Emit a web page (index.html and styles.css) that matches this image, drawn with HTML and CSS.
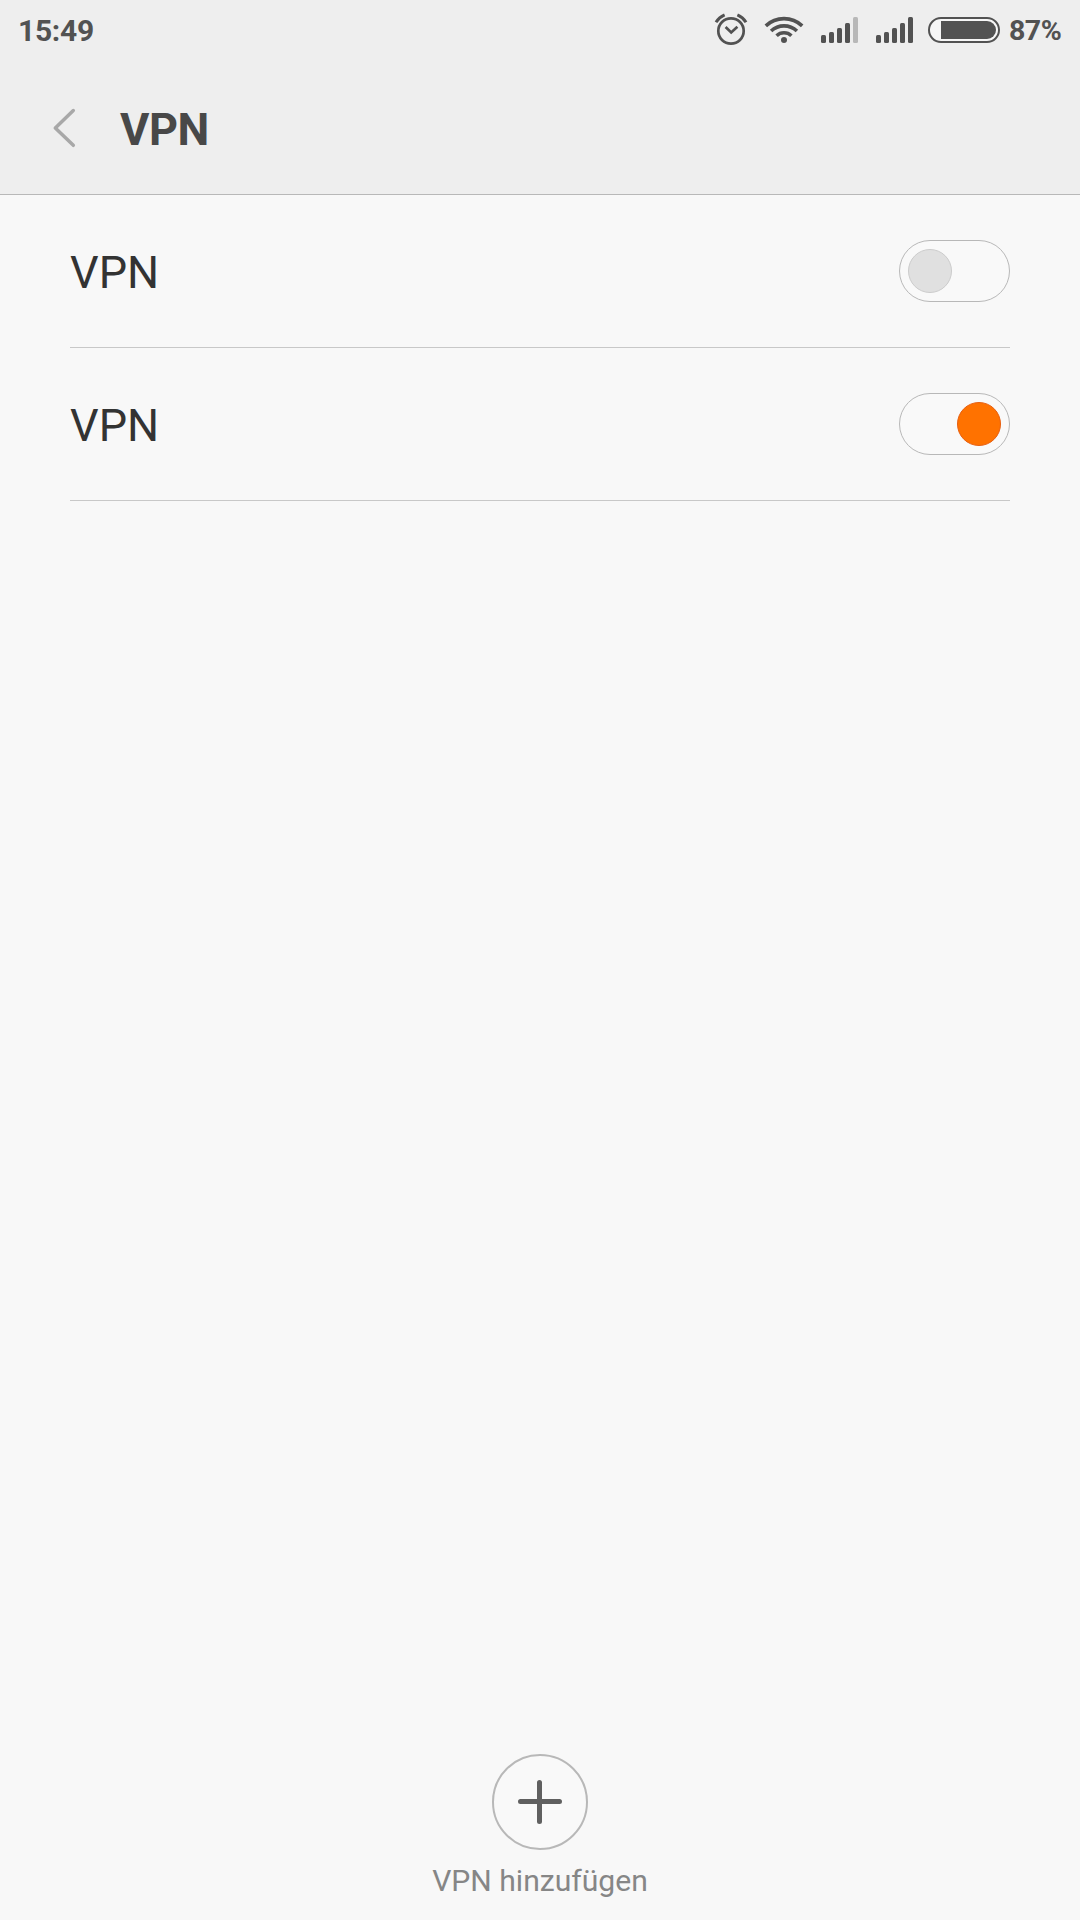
FILE: index.html
```html
<!DOCTYPE html>
<html lang="de">
<head>
<meta charset="utf-8">
<title>VPN</title>
<link rel="stylesheet" href="styles.css">
</head>
<body>
<div class="screen">
  <header class="header">
    <div class="status">
      <span class="clock">15:49</span>
      <div class="indicators">
        <svg class="alarm" width="34" height="36" viewBox="714 12 34 36" fill="none" stroke="#525252">
          <circle cx="731" cy="31" r="12.7" stroke-width="2.7"/>
          <path d="M725.6 27l5.6 5.4 6.2-5.6" stroke-width="2.7"/>
          <path d="M716 22.2q3-5 8.6-7.4M746 22.2q-3-5-8.6-7.4" stroke-width="3"/>
        </svg>
        <svg class="wifi" width="40" height="30" viewBox="764 14 40 30">
          <g fill="none" stroke="#525252" stroke-width="3.6">
            <path d="M765.8 25.9a26.5 26.5 0 0 1 36.4 0"/>
            <path d="M771.1 31a18.7 18.7 0 0 1 25.8 0"/>
            <path d="M776.6 35.7a10.8 10.8 0 0 1 14.8 0"/>
          </g>
          <circle cx="784" cy="40" r="3" fill="#525252"/>
        </svg>
        <svg class="signal" width="37" height="26" viewBox="0 0 37 26" fill="#525252">
          <rect y="18" width="5" height="8" rx="1.5"/>
          <rect x="8" y="15" width="5" height="11" rx="1.5"/>
          <rect x="16" y="11" width="5" height="15" rx="1.5"/>
          <rect x="24" y="6" width="5" height="20" rx="1.5"/>
          <rect x="32" width="5" height="26" rx="1.5" fill="#b8b8b8"/>
        </svg>
        <svg class="signal signal-second" width="37" height="26" viewBox="0 0 37 26" fill="#525252">
          <rect y="18" width="5" height="8" rx="1.5"/>
          <rect x="8" y="15" width="5" height="11" rx="1.5"/>
          <rect x="16" y="11" width="5" height="15" rx="1.5"/>
          <rect x="24" y="6" width="5" height="20" rx="1.5"/>
          <rect x="32" width="5" height="26" rx="1.5"/>
        </svg>
        <svg class="battery" width="72" height="26" viewBox="0 0 72 26">
          <rect x="1" y="1" width="70" height="24" rx="12" fill="#f6f6f6" stroke="#525252" stroke-width="2"/>
          <path d="M13 4h46a9 9 0 0 1 0 18H13z" fill="#525252"/>
        </svg>
        <span class="percent">87%</span>
      </div>
    </div>
    <div class="titlebar">
      <svg class="back" width="24" height="40" viewBox="52 108 24 40" fill="none" stroke="#a8a8a8" stroke-width="3.5" stroke-linecap="round" stroke-linejoin="round">
        <path d="M73.3 110.5L55.3 128l18 17.3"/>
      </svg>
      <h1 class="title">VPN</h1>
    </div>
  </header>
  <main class="list">
    <div class="row"><span class="name">VPN</span><span class="switch"><i class="knob"></i></span></div>
    <div class="row"><span class="name">VPN</span><span class="switch on"><i class="knob"></i></span></div>
  </main>
  <footer class="footer">
    <div class="add">
      <svg width="44" height="44" viewBox="0 0 44 44" stroke="#606060" stroke-width="5" stroke-linecap="round">
        <path d="M2.500 21.500h39M21.500 2.500v39"/>
      </svg>
    </div>
    <span class="add-label">VPN hinzufügen</span>
  </footer>
</div>
</body>
</html>
```
FILE: styles.css
```css
* { box-sizing: border-box; }
body {
  margin: 0;
  background: #f8f8f8;
  font-family: Roboto, sans-serif;
}
svg { display: block; flex: none; }
.screen {
  display: flex;
  flex-direction: column;
  width: 1080px;
  height: 1920px;
}
.header {
  height: 195px;
  background: #eeeeee;
  border-bottom: 1px solid #b8b8b8;
}
.status {
  display: flex;
  justify-content: space-between;
  height: 62px;
  padding: 0 19px 0 18px;
  color: #525252;
  font-weight: 700;
  line-height: 62px;
}
.clock {
  font-size: 30px;
  letter-spacing: -0.3px;
}
.indicators {
  display: flex;
  align-items: flex-start;
}
.alarm { margin-top: 12px; }
.wifi { margin: 14px 0 0 16px; }
.signal { margin: 17px 0 0 17px; }
.signal-second { margin-left: 18px; }
.battery { margin: 17px 0 0 15px; }
.percent {
  width: 52px;
  margin-left: 9px;
  font-size: 28.5px;
  letter-spacing: -0.5px;
}
.titlebar {
  display: flex;
  align-items: flex-start;
  padding: 46px 0 0 52px;
}
.title {
  margin: -5px 0 0 44px;
  color: #484848;
  font-size: 45px;
  font-weight: 700;
  letter-spacing: -0.4px;
  line-height: 53px;
}
.list {
  flex: 1;
  padding: 0 70px;
}
.row {
  display: flex;
  align-items: center;
  justify-content: space-between;
  height: 153px;
  border-bottom: 1px solid #c8c8c8;
}
.name {
  padding-top: 3px;
  color: #333333;
  font-size: 45px;
  line-height: 53px;
}
.switch {
  display: flex;
  align-items: center;
  width: 111px;
  height: 62px;
  padding: 0 8px;
  background: #f9f9f9;
  border: 1px solid #b8b8b8;
  border-radius: 31px;
}
.knob {
  width: 44px;
  height: 44px;
  background: #e0e0e0;
  border: 1px solid #cccccc;
  border-radius: 50%;
}
.on { justify-content: flex-end; }
.on .knob {
  background: #ff7200;
  border-color: #e85f10;
}
.footer {
  display: flex;
  flex-direction: column;
  align-items: center;
  height: 166px;
}
.add {
  display: flex;
  align-items: center;
  justify-content: center;
  width: 96px;
  height: 96px;
  background: #f9f9f9;
  border: 2px solid #b8b8b8;
  border-radius: 50%;
}
.add-label {
  margin-top: 13px;
  color: #868686;
  font-size: 30.1px;
  line-height: 36px;
}
```
